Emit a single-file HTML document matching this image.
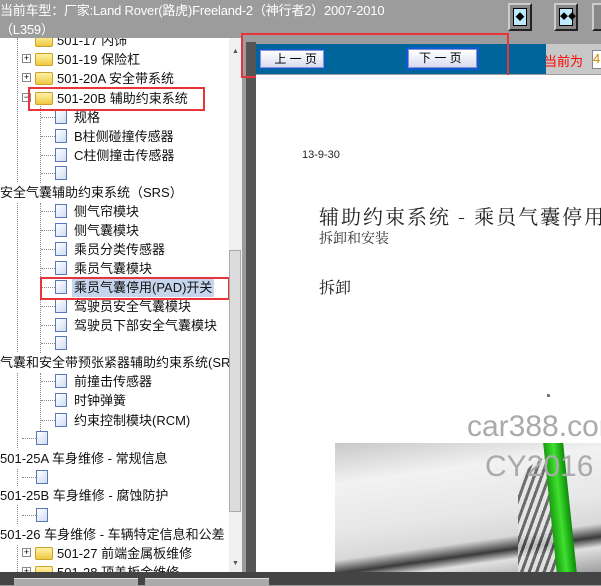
<!DOCTYPE html>
<html><head><meta charset="utf-8"><style>
*{margin:0;padding:0;box-sizing:border-box}
body{width:601px;height:585px;overflow:hidden;background:#9c9c9c;position:relative;font-family:"Liberation Sans","Noto Sans CJK SC",sans-serif;}
.a{position:absolute}
.title{left:0;top:1px;color:#fff;font-size:13px;line-height:19px;white-space:nowrap;letter-spacing:-0.2px}
#tree{left:0;top:38px;width:229px;height:534px;background:#fff;overflow:hidden}
.r{position:absolute;height:19px;line-height:19px;font-size:13px;color:#111;white-space:nowrap}
.pl{position:absolute;width:9px;height:9px;border:1px solid #888;background:#fff;font-size:9px;line-height:7px;text-align:center;color:#000}
.fd{position:absolute;width:18px;height:13px;background:linear-gradient(#fff3a8,#f0c840);border:1px solid #c9a22a;border-radius:2px}
.dc{position:absolute;width:12px;height:14px;background:linear-gradient(135deg,#fff,#cfdcf5);border:1px solid #5a78b8}
.dl{position:absolute;border-top:1px dotted #888;width:14px}
.vl{position:absolute;border-left:1px dotted #888}
</style></head><body>
<div class="a title">当前车型：厂家:Land Rover(路虎)Freeland-2（神行者2）2007-2010<br>（L359）</div>
<div class="a" style="left:508px;top:3px;width:24px;height:28px;background:#888;border:2px solid;border-color:#ccc #222 #222 #ccc"><div style="margin:3px 3px;width:14px;height:18px;background:#bfe9ff;border:1px solid #000;font-size:9px;text-align:center;line-height:16px">◆</div></div>
<div class="a" style="left:554px;top:3px;width:24px;height:28px;background:#888;border:2px solid;border-color:#ccc #222 #222 #ccc"><div style="margin:3px 3px;width:14px;height:18px;background:#bfe9ff;border:1px solid #000;font-size:8px;text-align:center;line-height:16px">◆◆</div></div>
<div class="a" style="left:592px;top:3px;width:12px;height:28px;background:#888;border:2px solid;border-color:#ccc #222 #222 #ccc"></div>
<div class="a" id="tree">
<div class="vl" style="left:17px;top:0;height:534px"></div>
<div class="vl" style="left:40px;top:65px;height:80px"></div>
<div class="vl" style="left:40px;top:165px;height:150px"></div>
<div class="vl" style="left:40px;top:335px;height:60px"></div>
<div class="r" style="top:-7px;left:35px"><div class="fd" style="left:0;top:3px"></div><span style="position:absolute;left:22px">501-17 内饰</span></div>
<div class="pl" style="left:22px;top:16px">+</div><div class="fd" style="left:35px;top:15px"></div><div class="r" style="left:57px;top:12px">501-19 保险杠</div>
<div class="pl" style="left:22px;top:35px">+</div><div class="fd" style="left:35px;top:34px"></div><div class="r" style="left:57px;top:31px">501-20A 安全带系统</div>
<div class="pl" style="left:22px;top:55px">−</div><div class="fd" style="left:35px;top:54px"></div><div class="r" style="left:57px;top:51px">501-20B 辅助约束系统</div>
<div class="dl" style="left:41px;top:79px"></div><div class="dc" style="left:55px;top:72px"></div><div class="r" style="left:74px;top:70px">规格</div>
<div class="dl" style="left:41px;top:98px"></div><div class="dc" style="left:55px;top:91px"></div><div class="r" style="left:74px;top:89px">B柱侧碰撞传感器</div>
<div class="dl" style="left:41px;top:117px"></div><div class="dc" style="left:55px;top:110px"></div><div class="r" style="left:74px;top:108px">C柱侧撞击传感器</div>
<div class="dl" style="left:41px;top:135px"></div><div class="dc" style="left:55px;top:128px"></div>
<div class="r" style="left:0;top:145px;background:#fff">安全气囊辅助约束系统（SRS）</div>
<div class="dl" style="left:41px;top:173px"></div><div class="dc" style="left:55px;top:166px"></div><div class="r" style="left:74px;top:164px">侧气帘模块</div>
<div class="dl" style="left:41px;top:192px"></div><div class="dc" style="left:55px;top:185px"></div><div class="r" style="left:74px;top:183px">侧气囊模块</div>
<div class="dl" style="left:41px;top:211px"></div><div class="dc" style="left:55px;top:204px"></div><div class="r" style="left:74px;top:202px">乘员分类传感器</div>
<div class="dl" style="left:41px;top:230px"></div><div class="dc" style="left:55px;top:223px"></div><div class="r" style="left:74px;top:221px">乘员气囊模块</div>
<div class="dl" style="left:41px;top:249px"></div><div class="dc" style="left:55px;top:242px"></div><div class="r" style="left:72px;top:240px;background:#c5d5ec;padding:0 2px">乘员气囊停用(PAD)开关</div>
<div class="dl" style="left:41px;top:268px"></div><div class="dc" style="left:55px;top:261px"></div><div class="r" style="left:74px;top:259px">驾驶员安全气囊模块</div>
<div class="dl" style="left:41px;top:287px"></div><div class="dc" style="left:55px;top:280px"></div><div class="r" style="left:74px;top:278px">驾驶员下部安全气囊模块</div>
<div class="dl" style="left:41px;top:305px"></div><div class="dc" style="left:55px;top:298px"></div>
<div class="r" style="left:0;top:315px;background:#fff">气囊和安全带预张紧器辅助约束系统(SRS)</div>
<div class="dl" style="left:41px;top:343px"></div><div class="dc" style="left:55px;top:336px"></div><div class="r" style="left:74px;top:334px">前撞击传感器</div>
<div class="dl" style="left:41px;top:362px"></div><div class="dc" style="left:55px;top:355px"></div><div class="r" style="left:74px;top:353px">时钟弹簧</div>
<div class="dl" style="left:41px;top:382px"></div><div class="dc" style="left:55px;top:375px"></div><div class="r" style="left:74px;top:373px">约束控制模块(RCM)</div>
<div class="dl" style="left:22px;top:400px"></div><div class="dc" style="left:36px;top:393px"></div>
<div class="r" style="left:0;top:411px;background:#fff">501-25A 车身维修 - 常规信息</div>
<div class="dl" style="left:22px;top:439px"></div><div class="dc" style="left:36px;top:432px"></div>
<div class="r" style="left:0;top:448px;background:#fff">501-25B 车身维修 - 腐蚀防护</div>
<div class="dl" style="left:22px;top:477px"></div><div class="dc" style="left:36px;top:470px"></div>
<div class="r" style="left:0;top:487px;background:#fff">501-26 车身维修 - 车辆特定信息和公差</div>
<div class="pl" style="left:22px;top:510px">+</div><div class="fd" style="left:35px;top:509px"></div><div class="r" style="left:57px;top:506px">501-27 前端金属板维修</div>
<div class="pl" style="left:22px;top:529px">+</div><div class="fd" style="left:35px;top:528px"></div><div class="r" style="left:57px;top:525px">501-28 顶盖板金维修</div>
</div>
<div class="a" style="left:28px;top:87px;width:177px;height:24px;border:2px solid #e8343a"></div>
<div class="a" style="left:40px;top:277px;width:190px;height:23px;border:2px solid #e8343a"></div>
<div class="a" style="left:229px;top:38px;width:13px;height:534px;background:#f0f0f0"><div style="position:absolute;left:0;top:212px;width:12px;height:262px;background:#dcdcdc;border:1px solid #aaa"></div><div style="position:absolute;left:3px;top:10px;font-size:7px;color:#555">▲</div><div style="position:absolute;left:3px;top:522px;font-size:7px;color:#555">▼</div></div>
<div class="a" style="left:242px;top:38px;width:14px;height:547px;background:#9c9c9c"><div style="position:absolute;left:4px;top:4px;width:10px;height:543px;background:#555"></div></div>
<div class="a" style="left:256px;top:44px;width:290px;height:30px;background:#00659a"></div>
<div class="a" style="left:546px;top:44px;width:55px;height:30px;background:#c8c8c8"><span style="position:absolute;left:-2px;top:7px;color:#f00;font-size:13px">当前为</span><div style="position:absolute;left:46px;top:6px;width:12px;height:19px;background:#fff;border:1px solid #888;font-size:13px;color:#c80">4</div></div>
<div class="a" style="left:259px;top:49px;width:66px;height:20px;background:#0d5bd0;padding:1px"><div style="height:18px;background:linear-gradient(#fff,#d8dcf0);border:1px solid #8890d0;font-size:12px;line-height:16px;text-align:right;padding-right:6px">上 一 页</div></div>
<div class="a" style="left:406px;top:47px;width:73px;height:23px;background:#0d5bd0;padding:2px"><div style="height:19px;background:linear-gradient(#fff,#d8dcf0);border:1px solid #8890d0;font-size:12px;line-height:17px;padding-left:10px">下 一 页</div></div>
<div class="a" style="left:241px;top:33px;width:268px;height:45px;border:2px solid #e8343a"></div>
<div class="a" style="left:256px;top:75px;width:345px;height:497px;background:#fff;overflow:hidden">
<div class="a" style="left:46px;top:74px;font-size:11px;color:#222">13-9-30</div>
<div class="a" style="left:63px;top:126px;font-size:20px;letter-spacing:2px;color:#222;font-family:'Noto Serif CJK SC',serif;white-space:nowrap">辅助约束系统 - 乘员气囊停用</div>
<div class="a" style="left:63px;top:153px;font-size:14px;color:#333;font-family:'Noto Serif CJK SC',serif">拆卸和安装</div>
<div class="a" style="left:63px;top:200px;font-size:16px;color:#222;font-family:'Noto Serif CJK SC',serif">拆卸</div>
<div class="a" style="left:291px;top:319px;width:3px;height:3px;background:#777"></div>
<div class="a" style="left:79px;top:368px;width:270px;height:130px;background:linear-gradient(172deg,#c8c8c8,#f2f2f2 25%,#e6e6e6 55%,#d8d8d8 70%,#3a3a3a 78%,#e0e0e0 84%,#9a9a9a)"></div>
<div class="a" style="left:262px;top:380px;width:40px;height:120px;background:repeating-linear-gradient(110deg,#444 0 3px,#e6e6e6 3px 7px);opacity:.75;border-top-left-radius:50px"></div>
<div class="a" style="left:294px;top:368px;width:20px;height:130px;background:linear-gradient(90deg,#1a9a10,#3fe030,#0c8a08);transform:skewX(6deg)"></div>
<div class="a" style="left:211px;top:335px;font-size:30px;color:#aaa;white-space:nowrap">car388.com</div>
<div class="a" style="left:229px;top:375px;font-size:30px;color:#aaa;white-space:nowrap">CY2016</div>
</div>
<div class="a" style="left:0;top:572px;width:601px;height:13px;background:#444"><div style="position:absolute;left:14px;top:6px;width:124px;height:8px;background:#aaa;border-top:1px solid #ddd"></div><div style="position:absolute;left:145px;top:6px;width:124px;height:8px;background:#aaa;border-top:1px solid #ddd"></div></div>
</body></html>
